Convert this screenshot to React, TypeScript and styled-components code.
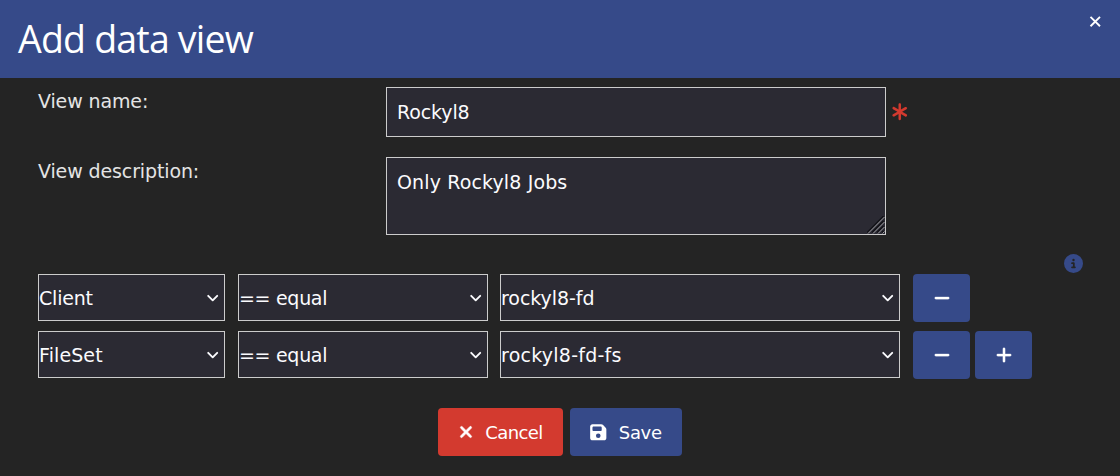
import React from 'react';
import styled, { createGlobalStyle } from 'styled-components';
import { FaAsterisk, FaCircleInfo, FaFloppyDisk, FaMinus, FaPlus, FaXmark } from 'react-icons/fa6';

const GlobalStyle = createGlobalStyle`
  * { box-sizing: border-box; }
  body {
    margin: 0;
    background: #242424;
    color: #e4e4e4;
    font-family: Verdana, "DejaVu Sans", sans-serif;
    font-size: 19px;
  }
  input, textarea, select, button { font: inherit; letter-spacing: inherit; }
`;

const Modal = styled.div`
  width: 1120px;
  height: 476px;
  overflow: hidden;
  background: #242424;
  letter-spacing: -0.12px;
`;

const Header = styled.header`
  display: flex;
  justify-content: space-between;
  align-items: flex-start;
  height: 78px;
  padding: 0 18px;
  background: #364a89;
  color: #fff;
`;

const Title = styled.h2`
  margin: 0;
  font: 400 37.5px/78px "Segoe UI", "Open Sans", sans-serif;
  letter-spacing: -0.8px;
  white-space: nowrap;
`;

const Close = styled.button`
  display: flex;
  margin: 14px 0 0;
  padding: 0;
  border: 0;
  background: none;
  color: #fff;
`;

const Body = styled.div`
  padding: 9px 37px 0 38px;
`;

const Field = styled.div`
  display: flex;
  margin-bottom: 20px;
`;

const Label = styled.label`
  width: 348px;
  line-height: 28px;
`;

const Input = styled.input`
  width: 500px;
  height: 50px;
  padding: 0 10px;
  border: 1px solid #ccc;
  border-radius: 0;
  background: #2b2a33;
  color: #fbfbfe;
`;

const TextAreaWrap = styled.div`
  position: relative;
  width: 500px;
  height: 78px;
`;

const TextArea = styled.textarea`
  display: block;
  width: 100%;
  height: 100%;
  padding: 10px;
  border: 1px solid #ccc;
  border-radius: 0;
  background: #2b2a33;
  color: #fbfbfe;
  line-height: 28px;
  letter-spacing: 0.13px;
  resize: none;
  overflow: hidden;
`;

const Grip = styled.svg`
  position: absolute;
  right: 1px;
  bottom: 1px;
`;

const Required = styled.span`
  display: flex;
  align-items: center;
  height: 50px;
  margin-left: 4px;
  color: #d33a2f;
`;

const InfoLine = styled.div`
  display: flex;
  justify-content: flex-end;
  height: 20px;
  margin-top: -1px;
  color: #364a89;
`;

const Condition = styled.div`
  display: flex;
  height: 47px;
  margin-bottom: 10px;
`;

const SelectWrap = styled.div<{ $width: number; $gap: number; $tracking: number }>`
  position: relative;
  width: ${(p) => p.$width}px;
  margin-right: ${(p) => p.$gap}px;
  letter-spacing: ${(p) => p.$tracking}px;
`;

const Select = styled.select`
  width: 100%;
  height: 47px;
  padding: 0;
  border: 1px solid #ccc;
  border-radius: 0;
  background: #2b2a33;
  color: #fbfbfe;
  appearance: none;
`;

const Chevron = styled.svg`
  position: absolute;
  right: 6px;
  top: 19px;
  pointer-events: none;
`;

const Button = styled.button<{ $width: number; $danger?: boolean }>`
  display: flex;
  align-items: center;
  justify-content: center;
  flex: none;
  width: ${(p) => p.$width}px;
  height: 48px;
  margin: 0;
  padding: 0;
  border: 0;
  border-radius: 4px;
  background: ${(p) => (p.$danger ? '#d33a2f' : '#364a89')};
  color: #fff;
`;

const Bold = styled.span<{ $weight: number }>`
  display: flex;
  svg {
    overflow: visible;
    stroke: currentColor;
    stroke-width: ${(p) => p.$weight}px;
    stroke-linejoin: round;
  }
`;

const Actions = styled.div`
  display: flex;
  gap: 5px;
`;

const Footer = styled.footer`
  display: flex;
  justify-content: center;
  gap: 7px;
  padding: 20px 2px 0 0;
`;

const Caption = styled.span<{ $gap: number; $tracking: number }>`
  margin-left: ${(p) => p.$gap}px;
  font-size: 18px;
  line-height: 49px;
  letter-spacing: ${(p) => p.$tracking}px;
`;

function Picker({ value, width, gap, tracking }: { value: string; width: number; gap: number; tracking: number }) {
  return (
    <SelectWrap $width={width} $gap={gap} $tracking={tracking}>
      <Select defaultValue={value}>
        <option>{value}</option>
      </Select>
      <Chevron width="13" height="10" viewBox="0 0 13 10" fill="none" stroke="#fbfbfe" strokeWidth="1.9" strokeLinecap="round" strokeLinejoin="round">
        <path d="M2.2 2.8 6.7 7.3 11.2 2.8" />
      </Chevron>
    </SelectWrap>
  );
}

const conditions = [
  { field: 'Client', operator: '== equal', value: 'rockyl8-fd', tracking: -0.2 },
  { field: 'FileSet', operator: '== equal', value: 'rockyl8-fd-fs', tracking: 0.1 },
];

export default function App() {
  return (
    <>
      <GlobalStyle />
      <Modal>
        <Header>
          <Title>Add data view</Title>
          <Close aria-label="Close">
            <svg width="14" height="14" viewBox="0 0 14 14" stroke="#fff" strokeWidth="1.9">
              <path d="M2.5 2.9 12 12.2M12 2.9 2.5 12.2" />
            </svg>
          </Close>
        </Header>
        <Body>
          <Field>
            <Label htmlFor="name">View name:</Label>
            <Input id="name" defaultValue="Rockyl8" />
            <Required><Bold $weight={2}><FaAsterisk size={19.5} /></Bold></Required>
          </Field>
          <Field>
            <Label htmlFor="description">View description:</Label>
            <TextAreaWrap>
              <TextArea id="description" defaultValue="Only Rockyl8 Jobs" />
              <Grip width="18" height="18" viewBox="0 0 18 18" fill="none">
                <path d="M0 16.5 16.5 0M5 16.5 16.5 5M10 16.5 16.5 10M15 16.5 16.5 15" stroke="#111116" strokeWidth="1.2" />
                <path d="M1 17.5 17.5 1M6 17.5 17.5 6M11 17.5 17.5 11M15.5 17.5 17.5 15.5" stroke="#a0a0a4" strokeWidth="1" />
              </Grip>
            </TextAreaWrap>
          </Field>
          <InfoLine><FaCircleInfo size={19} /></InfoLine>
          {conditions.map((c, i) => (
            <Condition key={c.field}>
              <Picker value={c.field} width={187} gap={13} tracking={c.tracking} />
              <Picker value={c.operator} width={250} gap={12} tracking={-0.3} />
              <Picker value={c.value} width={400} gap={13} tracking={c.tracking + 0.15} />
              <Actions>
                <Button $width={57} aria-label="Remove"><Bold $weight={8}><FaMinus size={18} /></Bold></Button>
                {i === conditions.length - 1 && (
                  <Button $width={57} aria-label="Add"><Bold $weight={8}><FaPlus size={18} /></Bold></Button>
                )}
              </Actions>
            </Condition>
          ))}
          <Footer>
            <Button $width={125} $danger><Bold $weight={16}><FaXmark size={18} /></Bold><Caption $gap={10} $tracking={-0.6}>Cancel</Caption></Button>
            <Button $width={112}><FaFloppyDisk size={18.5} /><Caption $gap={11} $tracking={-0.3}>Save</Caption></Button>
          </Footer>
        </Body>
      </Modal>
    </>
  );
}
